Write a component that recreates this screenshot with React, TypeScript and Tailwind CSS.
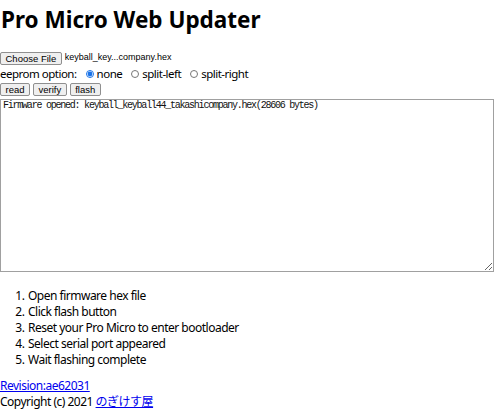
import React, { useState } from 'react'

const steps = [
  'Open firmware hex file',
  'Click flash button',
  'Reset your Pro Micro to enter bootloader',
  'Select serial port appeared',
  'Wait flashing complete',
]

const Btn: React.FC<{ children: React.ReactNode }> = ({ children }) => (
  <button className="h-[13px] px-[4.5px] text-[9.5px] leading-[11px] font-['Liberation_Sans',sans-serif] text-black bg-[#efefef] border border-[#8f8f8f] rounded-[2px]">
    {children}
  </button>
)

export default function App() {
  const [eeprom, setEeprom] = useState('none')
  const log = 'Firmware opened: keyball_keyball44_takashicompany.hex(28606 bytes)'

  return (
    <div className="font-['Noto_Sans','Noto_Sans_CJK_JP',sans-serif] text-[12px] text-black bg-white w-[500px] h-[411px] overflow-hidden">
      <h1 className="pt-[5px] pl-[1px] text-[22.5px] leading-[30px] font-bold">Pro Micro Web Updater</h1>

      <div className="mt-[16px] flex items-center gap-[3px] h-[14px]">
        <Btn>Choose File</Btn>
        <span className="text-[9px] font-['Liberation_Sans',sans-serif]">keyball_key...company.hex</span>
      </div>

      <div className="flex items-center h-[17px] text-[11.5px] leading-[17px] tracking-[-0.5px]">
        <span>eeprom option:</span>
        {['none', 'split-left', 'split-right'].map((opt) => (
          <label key={opt} className="flex items-center ml-[9px]">
            <input
              type="radio"
              name="eeprom"
              checked={eeprom === opt}
              onChange={() => setEeprom(opt)}
              className="w-[8px] h-[8px] m-0 mr-[3px] accent-[#1a73e8]"
            />
            {opt}
          </label>
        ))}
      </div>

      <div className="flex gap-[3px] mt-[1px] h-[13px]">
        <Btn>read</Btn>
        <Btn>verify</Btn>
        <Btn>flash</Btn>
      </div>

      <textarea
        readOnly
        value={log}
        className="block mt-[3px] w-[494px] h-[173px] border border-[#a0a0a0] px-[2px] py-0 text-[10px] leading-[11px] tracking-[-1.23px] font-['Liberation_Mono',monospace] text-[#111] resize-y outline-none"
      />

      <ol className="list-decimal pl-[27px] mt-[16px] text-[12px] leading-[16px] tracking-[-0.5px]">
        {steps.map((s) => (
          <li key={s} className="pl-[1px]">{s}</li>
        ))}
      </ol>

      <div className="mt-[10px] text-[12px] leading-[15.5px] tracking-[-0.5px]">
        <a href="#" className="text-[#0000ee] underline">Revision:ae62031</a>
        <div>
          Copyright (c) 2021 <a href="#" className="text-[#0000ee] underline">のぎけす屋</a>
        </div>
      </div>
    </div>
  )
}
